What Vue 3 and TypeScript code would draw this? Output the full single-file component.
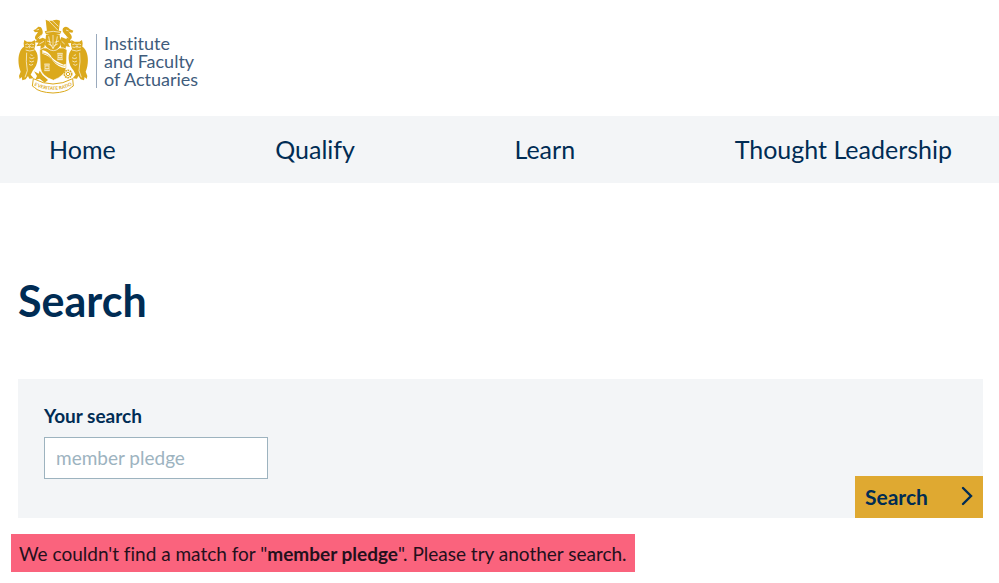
<script setup lang="ts">
import { ref } from 'vue'

const links: string[] = ['Home', 'Qualify', 'Learn', 'Thought Leadership']
const term = ref<string>('')
const lastTerm = ref<string>('member pledge')

function search(): void {
  if (term.value.trim()) lastTerm.value = term.value.trim()
}
</script>

<template>
  <div class="page">
    <header class="header">
      <a class="brand" href="#">
        <svg class="crest" viewBox="24 24 210 228" aria-hidden="true">
          <defs>
            <g id="owl">
              <path d="M43 90l8 5h14l10-5 1 15-3 12c8 8 11 19 10 31-1 14-7 26-15 34l-6 12 9 11-13 1-4-8-7 10-10 3-2-10-6 6-2-9 5-13c-8-18-9-44-2-60 3-8 7-12 12-15l-1-10z" fill="#dba91c" />
              <path d="M46 104q6-5 12 1 6-6 14-1M46 111q7 4 12-3 6 7 14 3M58 109v6M47 120q12 6 26 0" fill="none" stroke="#fff" stroke-width="2" />
              <path d="M50 128q-3 26 2 54l-7 20M61 134l7 3M58 143l7 3 8-3M58 153l7 3 7-3M57 163l6 3 6-3" fill="none" stroke="#fff" stroke-width="2" />
            </g>
            <path id="motto" d="M73 226Q129 254 186 226" />
          </defs>
          <use href="#owl" />
          <use href="#owl" transform="matrix(-1 0 0 1 259 0)" />
          <g fill="#dba91c">
            <path d="M107 29q12 6 23 2 10-4 20 1l-4 34q-18-5-35 0z" />
            <path d="M104 64q25-9 50 0l-4 9h-42z" />
            <path d="M96 57q-2-8-11-7l-8 8-7 3 5 6 9-1-8 12q-4 9 5 12l-8 7 13 1-7 11 13-2-1 13 12-8 5-24-10-5-11 5q0-7 8-13 6-6 1-18z" />
            <path d="M159 55q-4 9 5 17 10 9 5 15l-15-6-5 12 5 20 12 8 2-12 12 2-6-11 13-1-7-9q9-6 3-16l-6-7 10 1 3-6-10-4q-7-10-16-7z" />
            <path d="M108 75q20-8 41 0l3 30q-9 16-23 20-14-4-24-20z" />
            <path d="M89 119q12-8 22-5 10 8 19 8t18-8q12-3 23 5l-2 54q-3 24-39 38-36-13-39-37z" stroke="#fff" stroke-width="2" />
            <path d="M72 184l14 7 3-9 9 14 16 14-10 8-15-12-13 3 5-11z" />
          </g>
          <path d="M115 31l29 30M126 31l19 18M109 67q21-6 41 0M116 79q0 21 13 37M142 79q0 21-13 37M129 75v40M111 93l13 4M147 93l-13 4M115 102l10 5M143 102l-10 5M80 60l7-2M83 85l11-10M88 102l14-8M168 60l8 3M175 84l-13-9M164 102l-9-8" fill="none" stroke="#fff" stroke-width="2" />
          <path d="M97 120q19 4 28 22 12 13 36 22l6-3v14q-23-3-38-22-10-16-32-22z" fill="#fff" />
          <path d="M98 129q18 2 28 19 12 15 38 21" fill="none" stroke="#dba91c" stroke-width="2" />
          <g fill="none" stroke="#fff" stroke-width="2">
            <path d="M142 130h16M144 130v19M156 130v19M142 149h16M144 136h12M144 142h12M150 130v6M150 142v7" />
            <path d="M103 162h16M105 162v20M117 162v20M103 182h16M105 168h12M105 175h12M111 162v6M111 175v7" />
          </g>
          <circle cx="174" cy="192" r="11" fill="#fff" stroke="#dba91c" stroke-width="5" stroke-dasharray="5 2" />
          <circle cx="174" cy="192" r="5" fill="none" stroke="#dba91c" stroke-width="3" />
          <path d="M70 206Q129 238 188 206l2 22-6 4q-13 15-55 17-43-2-56-17l-6-4z" fill="#fff" stroke="#dba91c" stroke-width="3" />
          <text class="motto"><textPath href="#motto" startOffset="50%" text-anchor="middle">E VERITATE RATIO</textPath></text>
        </svg>
        <span class="brand-name">Institute<br>and Faculty<br>of Actuaries</span>
      </a>
    </header>

    <nav class="nav" aria-label="Main">
      <a v-for="link in links" :key="link" href="#">{{ link }}</a>
    </nav>

    <main class="main">
      <h1>Search</h1>
      <form class="panel" @submit.prevent="search">
        <div class="field">
          <label for="query">Your search</label>
          <input id="query" v-model="term" type="text" placeholder="member pledge">
        </div>
        <button type="submit">
          <span>Search</span>
          <svg viewBox="0 0 12 20" aria-hidden="true"><path d="M2 2l8 8-8 8" fill="none" stroke="currentColor" stroke-width="2.4" stroke-linecap="round" /></svg>
        </button>
      </form>
      <p class="notice" role="status">We couldn't find a match for "<strong>{{ lastTerm }}</strong>". Please try another search.</p>
    </main>
  </div>
</template>

<style>
body {
  margin: 0;
  background: #fff;
}
</style>

<style scoped>
.page {
  color: #002c54;
  font-family: Lato, "Open Sans", sans-serif;
  font-variant-ligatures: none;
}

.header {
  padding: 18px 18px 22px;
}

.brand {
  display: inline-flex;
  align-items: flex-end;
  gap: 8px;
  color: #3f5c7c;
  text-decoration: none;
  vertical-align: top;
}

.crest {
  width: 70px;
  height: 76px;
}

.motto {
  fill: #dba91c;
  font-size: 14px;
  font-weight: 700;
}

.brand-name {
  margin-bottom: 6px;
  padding-left: 7px;
  border-left: 1px solid #9aaabd;
  font-size: 18px;
  line-height: 18px;
}

.nav {
  display: flex;
  justify-content: space-between;
  padding: 17px 47px 17px 49px;
  background: #f3f5f7;
  font-size: 25px;
  line-height: 33px;
}

.nav a {
  color: inherit;
  text-decoration: none;
}

.main {
  padding: 92px 16px 11px 18px;
}

h1 {
  margin: 0 0 52px;
  font-size: 43px;
  font-weight: 700;
  line-height: 52px;
}

.panel {
  display: flex;
  align-items: flex-end;
  justify-content: space-between;
  background: #f3f5f7;
}

.field {
  display: flex;
  flex-direction: column;
  gap: 9px;
  padding: 25px 26px 39px;
}

label {
  font-size: 19px;
  font-weight: 700;
  line-height: 24px;
}

input {
  box-sizing: border-box;
  width: 224px;
  height: 42px;
  padding: 0 11px 2px;
  border: 1px solid #9db3bf;
  border-radius: 0;
  background: #fff;
  color: #002c54;
  font: 19px Lato, "Open Sans", sans-serif;
}

input::placeholder {
  color: #9db3bf;
  opacity: 1;
}

button {
  display: flex;
  align-items: center;
  justify-content: space-between;
  width: 128px;
  height: 42px;
  padding: 0 10px 2px;
  border: 0;
  background: #dfa931;
  color: #002c54;
  font: 700 21px Lato, "Open Sans", sans-serif;
  cursor: pointer;
}

button svg {
  width: 12px;
  height: 20px;
}

.notice {
  width: fit-content;
  margin: 16px 0 0 -7px;
  padding: 9px 8px 7px;
  background: #fa637d;
  color: #24101c;
  font-size: 19px;
  line-height: 22px;
}
</style>
